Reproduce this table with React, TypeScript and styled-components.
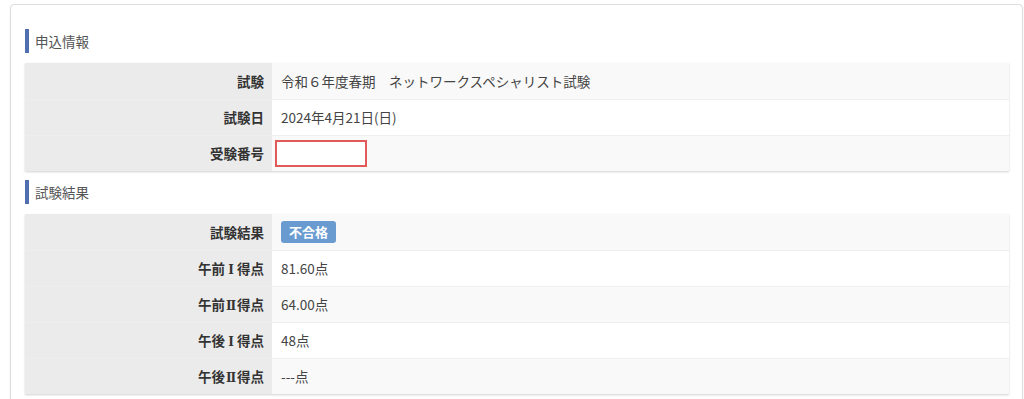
import styled, { createGlobalStyle } from 'styled-components';

const GlobalStyle = createGlobalStyle`
	html, body {
		margin: 0;
		padding: 0;
		background: #ffffff;
	}
	body {
		font-family: 'Noto Sans CJK JP', 'Noto Sans', 'Liberation Sans', sans-serif;
		color: #333;
	}
`;

type Row = { label: string; numeral?: string; suffix?: string; value?: string; kind?: 'text' | 'input' | 'badge' };

const applyRows: Row[] = [
	{ label: '試験', value: '令和６年度春期　ネットワークスペシャリスト試験' },
	{ label: '試験日', value: '2024年4月21日(日)' },
	{ label: '受験番号', kind: 'input' },
];

const resultRows: Row[] = [
	{ label: '試験結果', value: '不合格', kind: 'badge' },
	{ label: '午前', numeral: 'Ⅰ', suffix: '得点', value: '81.60点' },
	{ label: '午前', numeral: 'Ⅱ', suffix: '得点', value: '64.00点' },
	{ label: '午後', numeral: 'Ⅰ', suffix: '得点', value: '48点' },
	{ label: '午後', numeral: 'Ⅱ', suffix: '得点', value: '---点' },
];

const InfoTable = ({ rows }: { rows: Row[] }) => (
	<Table>
		<tbody>
			{rows.map((row, i) => (
				<tr key={i}>
					<LabelCell>
						{row.label}
						{row.numeral && <Numeral>{row.numeral}</Numeral>}
						{row.suffix}
					</LabelCell>
					<ValueCell $striped={i % 2 === 0}>
						{row.kind === 'input' ? (
							<NumberBox />
						) : row.kind === 'badge' ? (
							<Badge>{row.value}</Badge>
						) : (
							row.value
						)}
					</ValueCell>
				</tr>
			))}
		</tbody>
	</Table>
);

export default function App() {
	return (
		<>
			<GlobalStyle />
			<Panel>
				<Heading>申込情報</Heading>
				<InfoTable rows={applyRows} />
				<Heading $first={false}>試験結果</Heading>
				<InfoTable rows={resultRows} />
			</Panel>
		</>
	);
}

const Panel = styled.div`
	margin: 4px 1px 0 10px;
	padding: 24px 13px 12px 14px;
	border: 1px solid #dddddd;
	border-radius: 4px;
	box-shadow: 0 1px 2px rgba(0, 0, 0, 0.08);
	background: #fff;
`;

const Heading = styled.h3<{ $first?: boolean }>`
	display: flex;
	align-items: center;
	height: 24px;
	margin: ${(p) => (p.$first === false ? '9px' : '0')} 0 10px 0;
	padding-left: 6px;
	border-left: 4px solid #4f6fb0;
	font-size: 13.5px;
	font-weight: normal;
	color: #555;
	line-height: 24px;
`;

const Table = styled.table`
	width: 100%;
	border-collapse: collapse;
	box-shadow: 0 1px 2px rgba(0, 0, 0, 0.18);
	font-size: 13.5px;

	& tr + tr td {
		box-shadow: inset 0 1px 0 #eeeeee;
	}
`;

const LabelCell = styled.td`
	width: 247px;
	box-sizing: border-box;
	height: 36px;
	padding: 0 8px;
	background: #ebebeb;
	text-align: right;
	font-weight: bold;
	font-size: 13.5px;
	color: #333;
	white-space: nowrap;
`;

const Numeral = styled.span`
	display: inline-block;
	width: 1em;
	text-align: center;
	font-family: 'DejaVu Serif', 'Liberation Serif', serif;
	font-size: 12px;
`;

const ValueCell = styled.td<{ $striped: boolean }>`
	height: 36px;
	padding: 0 9px;
	background: ${(p) => (p.$striped ? '#f9f9f9' : '#ffffff')};
	color: #444;
`;

const NumberBox = styled.div`
	width: 88px;
	height: 23px;
	margin-left: -6px;
	border: 2px solid #e05a5a;
	background: #fff;
`;

const Badge = styled.span`
	display: inline-block;
	padding: 0 8px;
	height: 22px;
	line-height: 22px;
	border-radius: 3px;
	background: #6a9bd0;
	color: #fff;
	font-weight: bold;
	font-size: 13px;
`;
